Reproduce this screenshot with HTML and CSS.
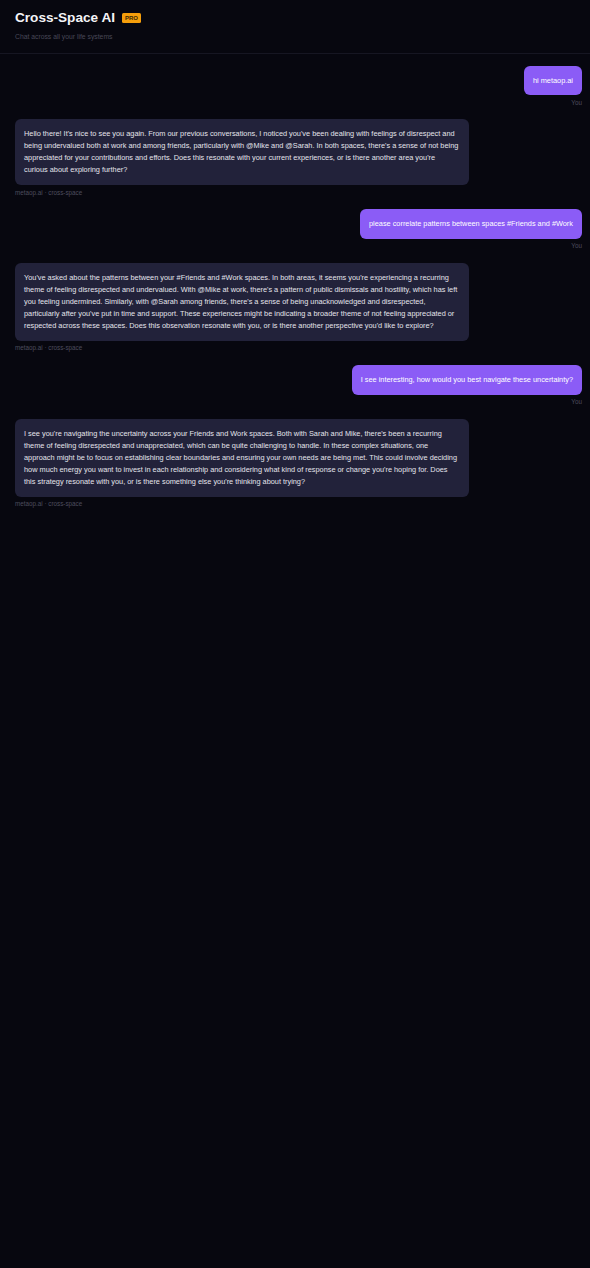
FILE: index.html
```html
<!DOCTYPE html>
<html lang="en">
<head>
<meta charset="utf-8">
<title>Cross-Space AI</title>
<link rel="stylesheet" href="styles.css">
</head>
<body>
<header class="header">
  <div class="title-row">
    <h1 class="title">Cross-Space AI</h1>
    <span class="badge">PRO</span>
  </div>
  <p class="subtitle">Chat across all your life systems</p>
</header>
<main class="chat">
  <div class="msg msg-user">
    <div class="bubble bubble-user">hi metaop.ai</div>
    <div class="meta">You</div>
  </div>
  <div class="msg msg-ai">
    <div class="bubble bubble-ai">Hello there! It's nice to see you again. From our previous conversations, I noticed you've been dealing with feelings of disrespect and being undervalued both at work and among friends, particularly with @Mike and @Sarah. In both spaces, there's a sense of not being appreciated for your contributions and efforts. Does this resonate with your current experiences, or is there another area you're curious about exploring further?</div>
    <div class="meta">metaop.ai · cross-space</div>
  </div>
  <div class="msg msg-user">
    <div class="bubble bubble-user">please correlate patterns between spaces #Friends and #Work</div>
    <div class="meta">You</div>
  </div>
  <div class="msg msg-ai">
    <div class="bubble bubble-ai">You've asked about the patterns between your #Friends and #Work spaces. In both areas, it seems you're experiencing a recurring theme of feeling disrespected and undervalued. With @Mike at work, there's a pattern of public dismissals and hostility, which has left you feeling undermined. Similarly, with @Sarah among friends, there's a sense of being unacknowledged and disrespected, particularly after you've put in time and support. These experiences might be indicating a broader theme of not feeling appreciated or respected across these spaces. Does this observation resonate with you, or is there another perspective you'd like to explore?</div>
    <div class="meta">metaop.ai · cross-space</div>
  </div>
  <div class="msg msg-user">
    <div class="bubble bubble-user">I see interesting, how would you best navigate these uncertainty?</div>
    <div class="meta">You</div>
  </div>
  <div class="msg msg-ai">
    <div class="bubble bubble-ai">I see you're navigating the uncertainty across your Friends and Work spaces. Both with Sarah and Mike, there's been a recurring theme of feeling disrespected and unappreciated, which can be quite challenging to handle. In these complex situations, one approach might be to focus on establishing clear boundaries and ensuring your own needs are being met. This could involve deciding how much energy you want to invest in each relationship and considering what kind of response or change you're hoping for. Does this strategy resonate with you, or is there something else you're thinking about trying?</div>
    <div class="meta">metaop.ai · cross-space</div>
  </div>
</main>
</body>
</html>
```

FILE: styles.css
```css
* { box-sizing: border-box; }

html, body {
  margin: 0;
  padding: 0;
  background: #07070f;
  min-height: 100%;
}

body {
  font-family: "Liberation Sans", Arial, sans-serif;
  color: #e4e4ec;
}

.header {
  padding: 9.6px 15px 12.5px;
  border-bottom: 1px solid #161622;
}

.title-row {
  display: flex;
  align-items: center;
  gap: 7px;
}

.title {
  margin: 0;
  font-size: 13.6px;
  line-height: 16px;
  font-weight: 700;
  color: #f4f4f7;
}

.badge {
  display: inline-block;
  background: #f59e0b;
  color: #3a2505;
  font-size: 6px;
  font-weight: 700;
  line-height: 6px;
  padding: 2px 3px;
  border-radius: 1.5px;
}

.subtitle {
  margin: 6px 0 0;
  font-size: 6.8px;
  line-height: 9px;
  color: #474757;
}

.chat {
  display: flex;
  flex-direction: column;
  gap: 12px;
  padding: 11.8px 8px 0 15px;
}

.msg {
  display: flex;
  flex-direction: column;
}

.msg-user { align-items: flex-end; }
.msg-ai { align-items: flex-start; }

.bubble {
  max-width: 80%;
  padding: 9px;
  border-radius: 6px;
  font-size: 7.35px;
  line-height: 12px;
}

.bubble-user {
  background: #8b5cf6;
  color: #ffffff;
  padding: 8.8px 9px;
}

.bubble-ai {
  background: #22223a;
  color: #e4e4ec;
}

.meta {
  margin-top: 2.4px;
  font-size: 6.3px;
  line-height: 9.6px;
  color: #4d4d5e;
}
```
